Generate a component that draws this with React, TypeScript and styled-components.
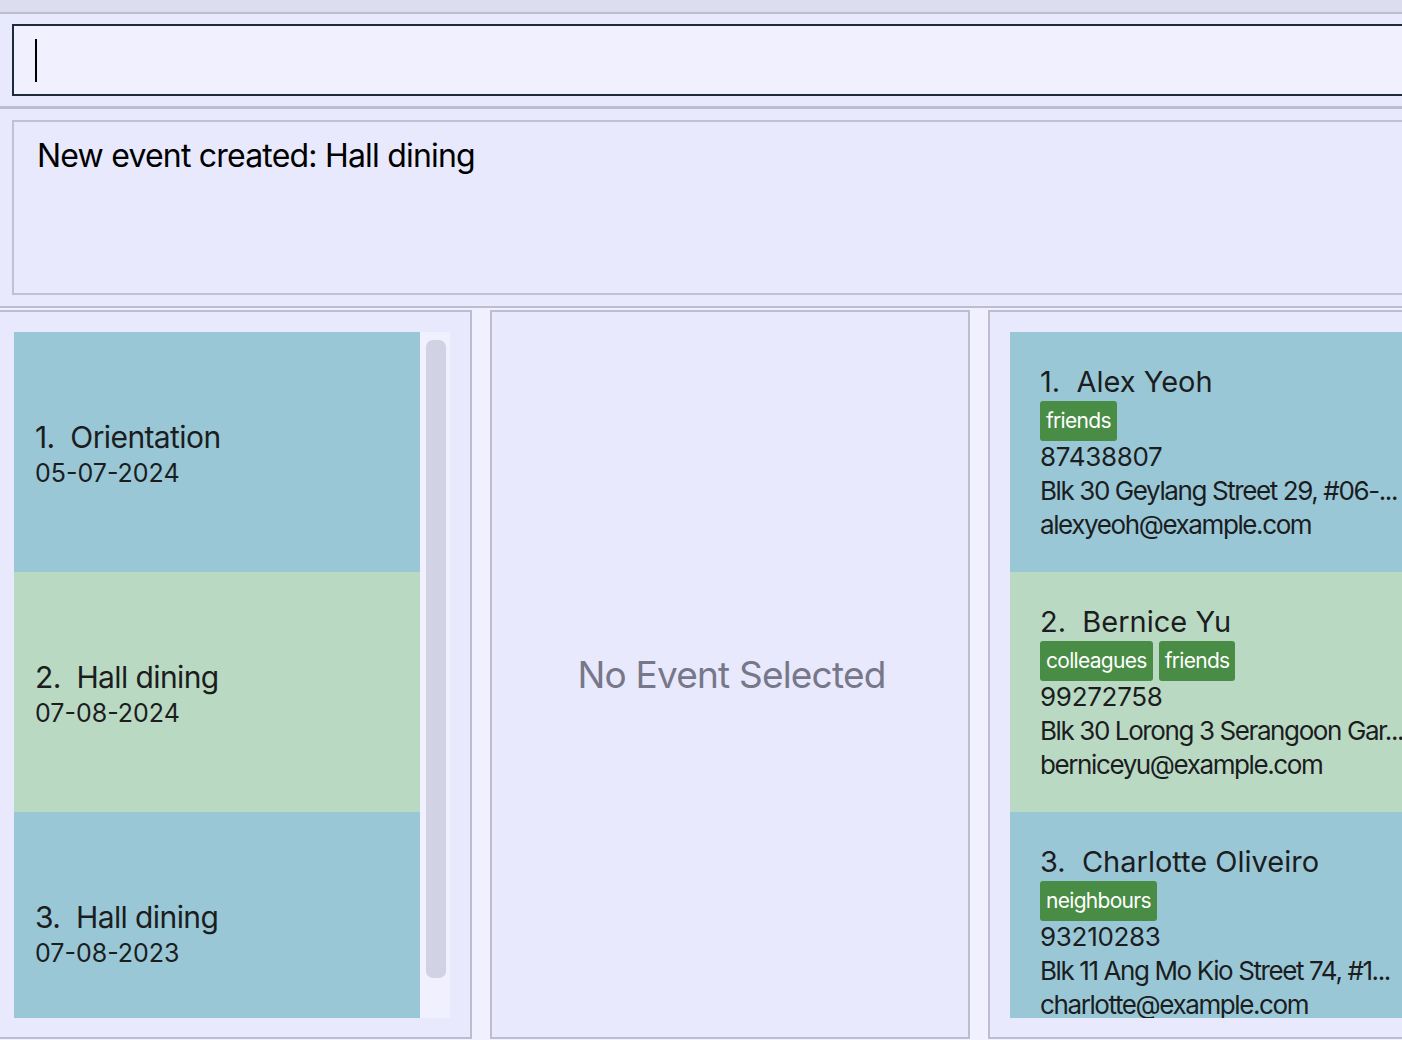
import React from "react";
import styled, { createGlobalStyle } from "styled-components";

const GlobalStyle = createGlobalStyle`
  html, body {
    margin: 0;
    padding: 0;
    background: #e8e9fc;
    overflow: hidden;
  }
  * { box-sizing: border-box; }
  body {
    font-family: Inter, "Open Sans", "Noto Sans", sans-serif;
  }
`;

const Page = styled.div`
  width: 1402px;
  height: 1040px;
  display: flex;
  flex-direction: column;
  overflow: hidden;
  background: #e8e9fc;
`;

const MenuStrip = styled.div`
  height: 14px;
  flex: none;
  background: #dcdef0;
  border-bottom: 2px solid #bebdcf;
`;

const CommandSection = styled.div`
  flex: none;
  padding: 10px 0 10px 12px;
  border-bottom: 3px solid #bebdcf;
`;

const CommandField = styled.div`
  width: calc(100% + 20px);
  height: 72px;
  border: 2px solid #1f2a3a;
  background: #f0f0fe;
  display: flex;
  align-items: center;
  padding-left: 21px;
`;

const Caret = styled.span`
  display: block;
  width: 2px;
  height: 43px;
  background: #000;
`;

const ResultSection = styled.div`
  flex: none;
  padding: 11px 0 11px 12px;
  border-bottom: 2px solid #bebdcf;
`;

const ResultBox = styled.div`
  width: calc(100% + 20px);
  height: 175px;
  border: 2px solid #c2c1d2;
  padding: 14px 0 0 23px;
  font-size: 32px;
  line-height: 40px;
  color: #000;
  letter-spacing: -0.8px;
`;

const PanelsRow = styled.div`
  flex: 1;
  display: flex;
  gap: 18px;
  padding-top: 2px;
  background: #f0f0fe;
  min-height: 0;
`;

const Panel = styled.div<{ $w: number }>`
  flex: none;
  width: ${(p) => p.$w}px;
  height: 729px;
  background: #e8e9fc;
  border: 2px solid #bebdcf;
`;

const EventPanel = styled(Panel)`
  border-left: none;
  padding: 20px 20px 19px 14px;
  display: flex;
`;

const EventList = styled.div`
  width: 406px;
  height: 100%;
  overflow: hidden;
  display: flex;
  flex-direction: column;
`;

const ScrollTrack = styled.div`
  width: 30px;
  height: 100%;
  background: #f0f0fe;
  padding: 8px 4px 40px 6px;
`;

const ScrollThumb = styled.div`
  width: 20px;
  height: 100%;
  border-radius: 7px;
  background: #d1d2e3;
`;

const Card = styled.div<{ $alt: boolean }>`
  flex: none;
  height: 240px;
  background: ${(p) => (p.$alt ? "#bad9c3" : "#9ac7d6")};
  color: #1b1d1f;
`;

const EventCard = styled(Card)`
  display: flex;
  flex-direction: column;
  justify-content: center;
  padding: 3px 0 0 21px;
`;

const CardTitle = styled.div`
  font-size: 30px;
  line-height: 36px;
  white-space: pre;
  letter-spacing: -0.6px;
`;

const EventDate = styled.div`
  font-size: 25px;
  line-height: 30px;
  margin-top: 3px;
`;

const DetailPanel = styled(Panel)`
  display: flex;
  align-items: center;
  justify-content: center;
`;

const EmptyText = styled.div`
  font-size: 37px;
  color: #77778a;
  letter-spacing: -0.8px;
  margin-left: 3px;
`;

const PersonPanel = styled(Panel)`
  border-right: none;
  padding: 20px 0 19px 20px;
`;

const PersonList = styled.div`
  width: 440px;
  height: 100%;
  overflow: hidden;
  display: flex;
  flex-direction: column;
`;

const PersonCard = styled(Card)`
  display: flex;
  flex-direction: column;
  padding: 33px 0 0 30px;
  overflow: hidden;
`;

const PersonName = styled(CardTitle)`
  font-size: 29px;
  line-height: 34px;
  letter-spacing: 0;
`;

const TagRow = styled.div`
  display: flex;
  gap: 6px;
  margin-top: 2px;
`;

const Tag = styled.span`
  height: 40px;
  padding: 0 6px;
  border-radius: 3px;
  background: #488c45;
  color: #fff;
  font-size: 21px;
  line-height: 40px;
  letter-spacing: -0.7px;
`;

const DetailLines = styled.div`
  margin-top: -1px;
  display: flex;
  flex-direction: column;
`;

const DetailLine = styled.div<{ $tight?: boolean }>`
  font-size: 26px;
  line-height: 34px;
  white-space: nowrap;
  letter-spacing: ${(p) => (p.$tight ? "-1.4px" : "-0.3px")};
`;

const events = [
  { name: "Orientation", date: "05-07-2024" },
  { name: "Hall dining", date: "07-08-2024" },
  { name: "Hall dining", date: "07-08-2023" },
];

const persons = [
  {
    name: "Alex Yeoh",
    tags: ["friends"],
    phone: "87438807",
    address: "Blk 30 Geylang Street 29, #06-...",
    email: "alexyeoh@example.com",
  },
  {
    name: "Bernice Yu",
    tags: ["colleagues", "friends"],
    phone: "99272758",
    address: "Blk 30 Lorong 3 Serangoon Gar...",
    email: "berniceyu@example.com",
  },
  {
    name: "Charlotte Oliveiro",
    tags: ["neighbours"],
    phone: "93210283",
    address: "Blk 11 Ang Mo Kio Street 74, #1...",
    email: "charlotte@example.com",
  },
];

export default function App() {
  return (
    <Page>
      <GlobalStyle />
      <MenuStrip />
      <CommandSection>
        <CommandField>
          <Caret />
        </CommandField>
      </CommandSection>
      <ResultSection>
        <ResultBox>New event created: Hall dining</ResultBox>
      </ResultSection>
      <PanelsRow>
        <EventPanel $w={472}>
          <EventList>
            {events.map((e, i) => (
              <EventCard key={i} $alt={i % 2 === 1}>
                <CardTitle>{`${i + 1}.  ${e.name}`}</CardTitle>
                <EventDate>{e.date}</EventDate>
              </EventCard>
            ))}
          </EventList>
          <ScrollTrack>
            <ScrollThumb />
          </ScrollTrack>
        </EventPanel>
        <DetailPanel $w={480}>
          <EmptyText>No Event Selected</EmptyText>
        </DetailPanel>
        <PersonPanel $w={500}>
          <PersonList>
            {persons.map((p, i) => (
              <PersonCard key={i} $alt={i % 2 === 1}>
                <PersonName>{`${i + 1}.  ${p.name}`}</PersonName>
                <TagRow>
                  {p.tags.map((t) => (
                    <Tag key={t}>{t}</Tag>
                  ))}
                </TagRow>
                <DetailLines>
                  <DetailLine>{p.phone}</DetailLine>
                  <DetailLine $tight>{p.address}</DetailLine>
                  <DetailLine $tight>{p.email}</DetailLine>
                </DetailLines>
              </PersonCard>
            ))}
          </PersonList>
        </PersonPanel>
      </PanelsRow>
    </Page>
  );
}
